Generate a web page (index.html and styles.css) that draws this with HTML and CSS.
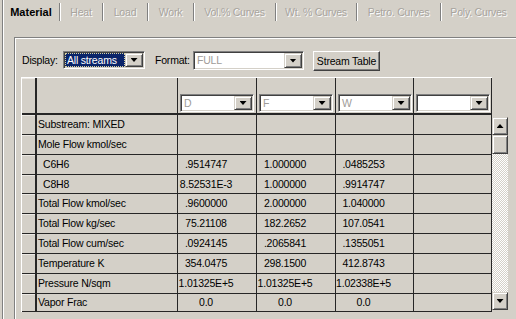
FILE: index.html
```html
<!DOCTYPE html>
<html lang="en">
<head>
  <meta charset="UTF-8" />
  <title>Material</title>
  <link rel="stylesheet" href="styles.css">
</head>
<body>
  <div class="window">
    <div class="tabs">
      <div class="tab tab-material">Material</div>
      <div class="tab tab-heat">Heat</div>
      <div class="tab tab-load">Load</div>
      <div class="tab tab-work">Work</div>
      <div class="tab tab-vol">Vol.% Curves</div>
      <div class="tab tab-wt">Wt. % Curves</div>
      <div class="tab tab-petro">Petro. Curves</div>
      <div class="tab tab-poly">Poly. Curves</div>
    </div>

    <div class="frame">
      <div class="toolbar">
        <span class="lbl lbl-display">Display:</span>
        <div class="combo combo-display">
          <div class="field"><span class="sel">All streams</span></div>
          <div class="dd-btn"><i class="tri-down"></i></div>
        </div>
        <span class="lbl lbl-format">Format:</span>
        <div class="combo combo-format">
          <div class="field dim">FULL</div>
          <div class="dd-btn"><i class="tri-down"></i></div>
        </div>
        <button class="btn-table">Stream Table</button>
      </div>

      <div class="sheet">
        <div class="grid">
          <div class="c rh hd"></div>
          <div class="c hd"></div>
          <div class="c hd val"><div class="combo combo-col"><div class="field dim">D</div><div class="dd-btn"><i class="tri-down"></i></div></div></div>
          <div class="c hd val"><div class="combo combo-col"><div class="field dim">F</div><div class="dd-btn"><i class="tri-down"></i></div></div></div>
          <div class="c hd val"><div class="combo combo-col"><div class="field dim">W</div><div class="dd-btn"><i class="tri-down"></i></div></div></div>
          <div class="c hd val"><div class="combo combo-col"><div class="field dim"></div><div class="dd-btn"><i class="tri-down"></i></div></div></div>

          <div class="c rh"></div><div class="c name">Substream: MIXED</div><div class="c num"></div><div class="c num"></div><div class="c num"></div><div class="c num"></div>
          <div class="c rh"></div><div class="c name">Mole Flow kmol/sec</div><div class="c num"></div><div class="c num"></div><div class="c num"></div><div class="c num"></div>
          <div class="c rh"></div><div class="c name sub">C6H6</div><div class="c num">.9514747</div><div class="c num">1.000000</div><div class="c num">.0485253</div><div class="c num"></div>
          <div class="c rh"></div><div class="c name sub">C8H8</div><div class="c num">8.52531E-3</div><div class="c num">1.000000</div><div class="c num">.9914747</div><div class="c num"></div>
          <div class="c rh"></div><div class="c name">Total Flow kmol/sec</div><div class="c num">.9600000</div><div class="c num">2.000000</div><div class="c num">1.040000</div><div class="c num"></div>
          <div class="c rh"></div><div class="c name">Total Flow kg/sec</div><div class="c num">75.21108</div><div class="c num">182.2652</div><div class="c num">107.0541</div><div class="c num"></div>
          <div class="c rh"></div><div class="c name">Total Flow cum/sec</div><div class="c num">.0924145</div><div class="c num">.2065841</div><div class="c num">.1355051</div><div class="c num"></div>
          <div class="c rh"></div><div class="c name">Temperature K</div><div class="c num">354.0475</div><div class="c num">298.1500</div><div class="c num">412.8743</div><div class="c num"></div>
          <div class="c rh"></div><div class="c name">Pressure N/sqm</div><div class="c num">1.01325E+5</div><div class="c num">1.01325E+5</div><div class="c num">1.02338E+5</div><div class="c num"></div>
          <div class="c rh"></div><div class="c name">Vapor Frac</div><div class="c num">0.0</div><div class="c num">0.0</div><div class="c num">0.0</div><div class="c num"></div>
        </div>

        <div class="vscroll">
          <div class="sb-btn"><i class="tri-up"></i></div>
          <div class="sb-thumb"></div>
          <div class="sb-track"></div>
          <div class="sb-btn"><i class="tri-down"></i></div>
        </div>
      </div>
    </div>
  </div>
</body>
</html>
```

FILE: styles.css
```css
* {
  box-sizing: border-box;
}

body {
  margin: 0;
  width: 516px;
  height: 319px;
  overflow: hidden;
  background: #d4d0c8;
  font-family: "Liberation Sans", Arial, sans-serif;
  font-size: 10.5px;
  letter-spacing: -0.2px;
  color: #000;
}

.window {
  margin-left: 2px;
  height: 319px;
  border-left: 1px solid #808080;
  box-shadow: inset 1px 0 #fff;
}

/* tab strip */
.tabs {
  display: flex;
  padding-top: 3px;
  height: 21px;
}

.tab {
  flex: none;
  height: 18px;
  line-height: 18px;
  text-align: center;
  color: #a8a49e;
  text-shadow: 1px 1px 0 #fbfbfb;
  border-right: 1px solid #808080;
  box-shadow: 1px 0 0 #fff;
}

.tab-material {
  color: #000;
  text-shadow: none;
  font-size: 11px;
  font-weight: bold;
  letter-spacing: 0;
}

.tab-material { width: 57px; }
.tab-heat { width: 43px; }
.tab-load { width: 45px; }
.tab-work { width: 46px; }
.tab-vol { width: 82px; }
.tab-wt { width: 81px; }
.tab-petro { width: 84px; }
.tab-poly { width: 75px; border-right: none; box-shadow: none; }

/* etched frame */
.frame {
  margin: 16px 0 0 11px;
  height: 282px;
  border-top: 1px solid #808080;
  border-left: 1px solid #808080;
  box-shadow: inset 1px 1px #fff;
}

.toolbar {
  display: flex;
  align-items: flex-start;
  height: 20px;
  margin: 13px 0 0 7px;
}

.lbl {
  line-height: 19px;
}

.lbl-display { width: 41px; }
.lbl-format { width: 38px; margin-left: 10px; }

/* combo boxes */
.combo {
  display: flex;
  height: 18px;
  background: #fff;
  border: 1px solid;
  border-color: #808080 #fff #fff #808080;
  box-shadow: inset 1px 1px #404040, inset -1px -1px #d4d0c8;
  padding: 1px;
}

.combo .field {
  flex: 1;
  padding-left: 2px;
  line-height: 14px;
  overflow: hidden;
  white-space: nowrap;
}

.combo .dim {
  color: #a09c98;
}

.combo-display { width: 82px; }
.combo-format { width: 111px; height: 19px; }
.combo-col { width: 74px; }

.combo-display .field {
  padding: 0;
}

.sel {
  display: block;
  height: 100%;
  padding-left: 2px;
  line-height: 14px;
  background: #0a246a;
  color: #fff;
  outline: 1px dotted #d8d2a0;
  outline-offset: -1px;
}

.dd-btn,
.sb-btn {
  display: flex;
  align-items: center;
  justify-content: center;
  background: #d4d0c8;
  border: 1px solid;
  border-color: #d4d0c8 #404040 #404040 #d4d0c8;
  box-shadow: inset 1px 1px #fff, inset -1px -1px #808080;
}

.dd-btn {
  width: 18px;
}

.tri-down,
.tri-up {
  display: block;
  width: 7px;
  height: 4px;
  background: #000;
}

.tri-down { clip-path: polygon(0 0, 100% 0, 50% 100%); }
.tri-up { clip-path: polygon(50% 0, 100% 100%, 0 100%); }

.btn-table {
  margin-left: 9px;
  width: 67px;
  height: 20px;
  padding: 0;
  font: inherit;
  letter-spacing: -0.2px;
  color: #000;
  background: #d4d0c8;
  border: 1px solid;
  border-color: #fff #404040 #404040 #fff;
  box-shadow: inset -1px -1px #808080;
}

/* stream grid */
.sheet {
  display: flex;
  align-items: flex-start;
  margin: 6px 0 0 6px;
}

.grid {
  display: grid;
  grid-template-columns: 15px 141px 79px 79px 78px 78px;
  grid-template-rows: 37px 20px 20px 20px 19px 20px 20px 20px 20px 20px 18px;
  border-top: 1px solid #fff;
  border-left: 1px solid #fff;
}

.c {
  display: flex;
  align-items: center;
  border-right: 1px solid #262626;
  border-bottom: 1px solid #262626;
  white-space: nowrap;
  overflow: hidden;
  padding-bottom: 1px;
}

.c.rh {
  border-right-width: 2px;
  box-shadow: inset 0 1px #ece9e4;
}

.c.hd {
  align-items: flex-end;
  border-bottom-width: 2px;
  padding-bottom: 1px;
}

.c.hd.val {
  padding-left: 2px;
}

.name {
  padding-left: 1px;
}

.name.sub {
  padding-left: 6px;
}

.num {
  justify-content: center;
  padding-right: 22px;
}

.vscroll {
  display: flex;
  flex-direction: column;
  width: 16px;
  height: 193px;
  margin-top: 40px;
}

.sb-btn {
  height: 18px;
}

.sb-thumb {
  height: 19px;
  background: #d4d0c8;
  border: 1px solid;
  border-color: #d4d0c8 #404040 #404040 #d4d0c8;
  box-shadow: inset 1px 1px #fff, inset -1px -1px #808080;
}

.sb-track {
  flex: 1;
  background: repeating-conic-gradient(#d4d0c8 0 25%, #fff 0 50%) 0 0 / 2px 2px;
}
```
